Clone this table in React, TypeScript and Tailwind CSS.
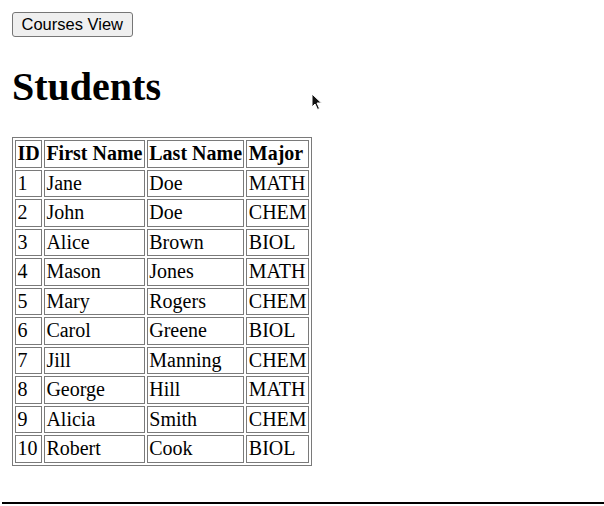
import React from 'react';

interface Student {
  id: number;
  first: string;
  last: string;
  major: string;
}

const students: Student[] = [
  { id: 1, first: 'Jane', last: 'Doe', major: 'MATH' },
  { id: 2, first: 'John', last: 'Doe', major: 'CHEM' },
  { id: 3, first: 'Alice', last: 'Brown', major: 'BIOL' },
  { id: 4, first: 'Mason', last: 'Jones', major: 'MATH' },
  { id: 5, first: 'Mary', last: 'Rogers', major: 'CHEM' },
  { id: 6, first: 'Carol', last: 'Greene', major: 'BIOL' },
  { id: 7, first: 'Jill', last: 'Manning', major: 'CHEM' },
  { id: 8, first: 'George', last: 'Hill', major: 'MATH' },
  { id: 9, first: 'Alicia', last: 'Smith', major: 'CHEM' },
  { id: 10, first: 'Robert', last: 'Cook', major: 'BIOL' },
];

const cell = 'border border-[#7a7a7a] px-[1.4px] py-[1px] text-left leading-[23.5px]';

const App: React.FC = () => {
  return (
    <div className="relative w-[604px] h-[506px] bg-white overflow-hidden font-['Liberation_Serif',serif] text-black">
      <div className="pl-[12px] pt-[12px]">
        <button className="h-[25px] px-[8.5px] bg-[#efefef] border border-[#767676] rounded-[3px] text-[16.5px] leading-[19px] font-['Liberation_Sans',Arial,sans-serif]">
          Courses View
        </button>

        {/* Heading */}
        <h1 className="mt-[27px] mb-[27px] text-[40px] leading-[46px] font-bold">Students</h1>

        <table className="border border-[#7a7a7a] border-separate border-spacing-[2px] text-[20px]">
          <thead>
            <tr>
              <th className={`${cell} font-bold`}>ID</th>
              <th className={`${cell} font-bold`}>First Name</th>
              <th className={`${cell} font-bold`}>Last Name</th>
              <th className={`${cell} font-bold`}>Major</th>
            </tr>
          </thead>
          <tbody>
            {students.map((s) => (
              <tr key={s.id}>
                <td className={cell}>{s.id}</td>
                <td className={cell}>{s.first}</td>
                <td className={cell}>{s.last}</td>
                <td className={cell}>{s.major}</td>
              </tr>
            ))}
          </tbody>
        </table>
      </div>

      {/* bottom rule */}
      <div className="absolute left-[2px] right-0 top-[502px] border-t-2 border-black" />

      {/* mouse pointer */}
      <svg className="absolute left-[311px] top-[93px]" width="12" height="18" viewBox="0 0 12 18">
        <path d="M1 1 L1 14 L4 11 L6.5 16.5 L8.5 15.5 L6 10 L10.5 10 Z" fill="#111" stroke="#fff" strokeWidth="1" />
      </svg>
    </div>
  );
};

export default App;
